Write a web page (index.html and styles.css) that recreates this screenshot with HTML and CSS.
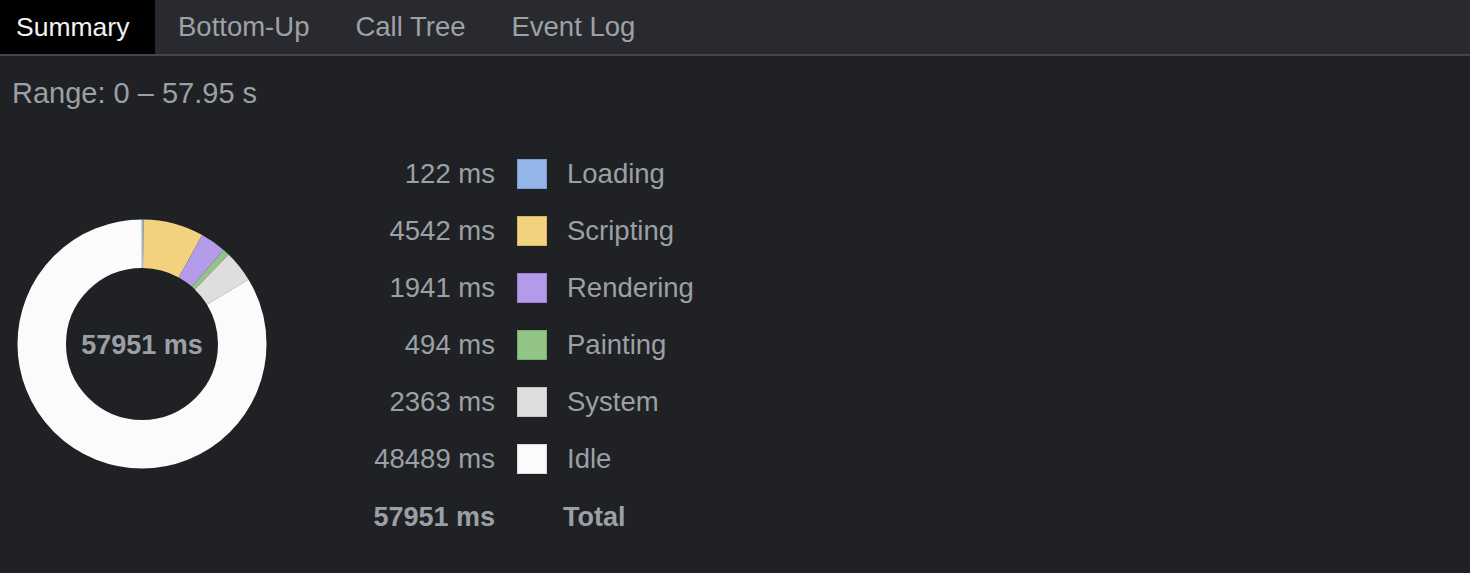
FILE: index.html
```html
<!DOCTYPE html>
<html>
<head>
<meta charset="utf-8">
<link rel="stylesheet" href="styles.css">
</head>
<body>
<div class="tabs">
  <div class="tab active">Summary</div>
  <div class="tab">Bottom-Up</div>
  <div class="tab">Call Tree</div>
  <div class="tab">Event Log</div>
</div>
<div class="content">
  <div class="range">Range: 0 – 57.95 s</div>
  <div class="summary">
    <svg class="donut" width="250" height="250" viewBox="0 0 250 250">
      <g transform="rotate(-90 125 125)" fill="none" stroke-width="48.5">
        <circle cx="125" cy="125" r="100.25" stroke="#93b7e8" stroke-dasharray="1.32 628.32" stroke-dashoffset="0"/>
        <circle cx="125" cy="125" r="100.25" stroke="#f2d27e" stroke-dasharray="49.25 628.32" stroke-dashoffset="-1.32"/>
        <circle cx="125" cy="125" r="100.25" stroke="#b49bea" stroke-dasharray="21.04 628.32" stroke-dashoffset="-50.57"/>
        <circle cx="125" cy="125" r="100.25" stroke="#92c486" stroke-dasharray="5.36 628.32" stroke-dashoffset="-71.61"/>
        <circle cx="125" cy="125" r="100.25" stroke="#dedede" stroke-dasharray="25.62 628.32" stroke-dashoffset="-76.97"/>
        <circle cx="125" cy="125" r="100.25" stroke="#fbfbfb" stroke-dasharray="526.1 628.32" stroke-dashoffset="-102.59"/>
      </g>
      <text x="125" y="135" text-anchor="middle" class="donut-text">57951 ms</text>
    </svg>
    <div class="legend">
      <div class="val">122 ms</div><div class="sw loading"></div><div class="lbl">Loading</div>
      <div class="val">4542 ms</div><div class="sw scripting"></div><div class="lbl">Scripting</div>
      <div class="val">1941 ms</div><div class="sw rendering"></div><div class="lbl">Rendering</div>
      <div class="val">494 ms</div><div class="sw painting"></div><div class="lbl">Painting</div>
      <div class="val">2363 ms</div><div class="sw system"></div><div class="lbl">System</div>
      <div class="val">48489 ms</div><div class="sw idle"></div><div class="lbl">Idle</div>
      <div class="val bold">57951 ms</div><div></div><div class="lbl bold total">Total</div>
    </div>
  </div>
</div>
</body>
</html>
```

FILE: styles.css
```css
html, body {
  margin: 0;
  padding: 0;
  background: #202124;
  font-family: "Liberation Sans", Arial, sans-serif;
  color: #9aa0a6;
  height: 100%;
}
.tabs {
  display: flex;
  height: 54px;
  background: #292a2f;
  border-bottom: 2px solid #45464b;
}
.tab {
  font-size: 27.5px;
  line-height: 54px;
  padding: 0 23px;
  color: #9ea1a6;
}
.tab.active {
  background: #000;
  color: #f2f2f2;
  font-size: 26.5px;
  padding: 0 22px 0 16px;
  width: 117px;
}
.content {
  padding: 0 12px;
}
.range {
  font-size: 29px;
  line-height: 36px;
  margin-top: 19px;
  color: #9aa0a6;
}
.summary {
  display: flex;
  align-items: center;
  margin-top: 34px;
}
.donut {
  margin-left: 5px;
  margin-top: -2px;
  display: block;
}
.donut-text {
  font-family: "Liberation Sans", Arial, sans-serif;
  font-weight: bold;
  font-size: 27px;
  fill: #9aa0a6;
}
.legend {
  display: grid;
  grid-template-columns: 190px 30px auto;
  grid-auto-rows: 57px;
  column-gap: 21px;
  align-items: center;
  margin-left: 38px;
  font-size: 27.5px;
}
.val {
  text-align: right;
}
.bold {
  font-weight: bold;
  font-size: 27px;
  padding-top: 4px;
}
.total {
  margin-left: -4px;
}
.sw {
  width: 30px;
  height: 30px;
  box-sizing: border-box;
  border: 1px solid;
  margin-left: 1px;
}
.loading { background: #93b7e8; border-color: #7d9fd0; }
.scripting { background: #f2d27e; border-color: #d8b764; }
.rendering { background: #b49bea; border-color: #9b83d2; }
.painting { background: #92c486; border-color: #7cab70; }
.system { background: #dedede; border-color: #c4c4c4; }
.idle { background: #fbfbfb; border-color: #dcdcdc; }
```
